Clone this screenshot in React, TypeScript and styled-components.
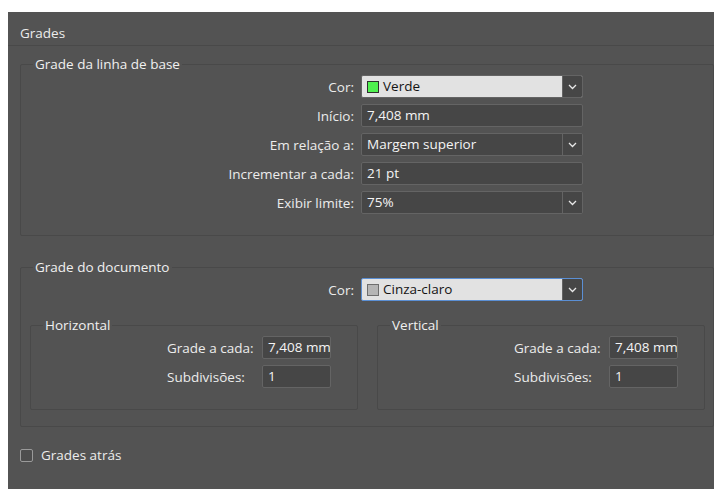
import React from "react";
import styled, { createGlobalStyle } from "styled-components";

const Global = createGlobalStyle`
  html, body { margin: 0; padding: 0; background: #ffffff; }
  body { font-family: "Open Sans", "Noto Sans", sans-serif; }
  #root { box-sizing: border-box; height: 489px; padding: 12px 0 0 8px; overflow: hidden; }
`;

const Panel = styled.div`
  height: 477px;
  background: #535353;
  color: #ececec;
  font-size: 13.5px;
  display: flex;
  flex-direction: column;
`;

const Title = styled.div`
  padding: 13px 12px 4px;
  line-height: 16px;
  border-bottom: 1px solid #494949;
`;

const Group = styled.fieldset<{ $top: number; $pb: number; $ml?: number }>`
  margin: ${(p) => p.$top}px 0 0 ${(p) => p.$ml ?? 12}px;
  padding: 3px 0 ${(p) => p.$pb}px 0;
  border: 1px solid #494949;
  border-radius: 2px;
  min-width: 0;
`;

const Legend = styled.legend`
  margin-left: 12px;
  padding: 0 2px;
  line-height: 16px;
  color: #f0f0f0;
`;

const Rows = styled.div`
  display: flex;
  flex-direction: column;
  gap: 6px;
`;

const Row = styled.div`
  display: grid;
  grid-template-columns: 333px 222px;
  column-gap: 7px;
  align-items: center;
`;

const Label = styled.span<{ $left?: boolean }>`
  text-align: ${(p) => (p.$left ? "left" : "right")};
  white-space: nowrap;
`;

const Field = styled.div<{ $w?: number }>`
  box-sizing: border-box;
  height: 23px;
  ${(p) => (p.$w ? `width: ${p.$w}px;` : "")}
  background: #464646;
  border: 1px solid #646464;
  border-radius: 2px;
  padding: 0 0 0 5px;
  line-height: 21px;
  color: #f4f4f4;
  white-space: nowrap;
  overflow: hidden;
`;

const Select = styled.div<{ $light?: boolean; $focus?: boolean }>`
  box-sizing: border-box;
  height: 23px;
  display: flex;
  border: 1px solid ${(p) => (p.$focus ? "#5b8fd4" : "#646464")};
  border-radius: 2px;
  overflow: hidden;
  background: ${(p) => (p.$light ? "#e2e2e2" : "#464646")};
  color: ${(p) => (p.$light ? "#141414" : "#f4f4f4")};
`;

const SelectValue = styled.div`
  flex: 1;
  display: flex;
  align-items: center;
  gap: 4px;
  padding-left: 5px;
  line-height: 21px;
  white-space: nowrap;
`;

const Swatch = styled.span<{ $color: string; $edge: string }>`
  box-sizing: border-box;
  width: 12px;
  height: 12px;
  background: ${(p) => p.$color};
  border: 1px solid ${(p) => p.$edge};
`;

const Caret = styled.div`
  width: 19px;
  background: #464646;
  border-left: 1px solid #646464;
  display: flex;
  align-items: center;
  justify-content: center;
`;

const Pair = styled.div`
  display: flex;
  gap: 19px;
  margin: 16px 0 0 9px;
`;

const SubGroup = styled.fieldset`
  box-sizing: border-box;
  width: 328px;
  margin: 0;
  padding: 3px 0 21px 0;
  border: 1px solid #494949;
  border-radius: 2px;
  min-width: 0;
`;

const SubRow = styled.div`
  display: grid;
  grid-template-columns: 95px 69px;
  padding-left: 136px;
  align-items: center;
`;

const Check = styled.label`
  display: flex;
  align-items: center;
  gap: 8px;
  margin: 20px 0 0 12px;
  line-height: 16px;
`;

const Box = styled.span`
  box-sizing: border-box;
  width: 13px;
  height: 13px;
  border: 1px solid #9a9a9a;
  border-radius: 2px;
  background: #4d4d4d;
`;

const Chevron = () => (
  <svg width="9" height="6" viewBox="0 0 9 6">
    <polyline points="1,1 4.5,4.5 8,1" fill="none" stroke="#e8e8e8" strokeWidth="1.3" />
  </svg>
);

type SelectProps = { value: string; swatch?: [string, string]; light?: boolean; focus?: boolean };

const Dropdown = ({ value, swatch, light, focus }: SelectProps) => (
  <Select $light={light} $focus={focus}>
    <SelectValue>
      {swatch && <Swatch $color={swatch[0]} $edge={swatch[1]} />}
      {value}
    </SelectValue>
    <Caret>
      <Chevron />
    </Caret>
  </Select>
);

const Axis = ({ title }: { title: string }) => (
  <SubGroup>
    <Legend>{title}</Legend>
    <Rows>
      <SubRow>
        <Label $left>Grade a cada:</Label>
        <Field $w={69}>7,408 mm</Field>
      </SubRow>
      <SubRow>
        <Label $left>Subdivisões:</Label>
        <Field $w={69}>1</Field>
      </SubRow>
    </Rows>
  </SubGroup>
);

export default function App() {
  return (
    <>
      <Global />
      <Panel>
        <Title>Grades</Title>
        <Group $top={10} $pb={21}>
          <Legend>Grade da linha de base</Legend>
          <Rows>
            <Row>
              <Label>Cor:</Label>
              <Dropdown value="Verde" swatch={["#4ff04f", "#2f2f2f"]} light />
            </Row>
            <Row>
              <Label>Início:</Label>
              <Field>7,408 mm</Field>
            </Row>
            <Row>
              <Label>Em relação a:</Label>
              <Dropdown value="Margem superior" />
            </Row>
            <Row>
              <Label>Incrementar a cada:</Label>
              <Field>21 pt</Field>
            </Row>
            <Row>
              <Label>Exibir limite:</Label>
              <Dropdown value="75%" />
            </Row>
          </Rows>
        </Group>
        <Group $top={23} $pb={16}>
          <Legend>Grade do documento</Legend>
          <Row>
            <Label>Cor:</Label>
            <Dropdown value="Cinza-claro" swatch={["#b5b5b5", "#6e6e6e"]} light focus />
          </Row>
          <Pair>
            <Axis title="Horizontal" />
            <Axis title="Vertical" />
          </Pair>
        </Group>
        <Check>
          <Box />
          Grades atrás
        </Check>
      </Panel>
    </>
  );
}
